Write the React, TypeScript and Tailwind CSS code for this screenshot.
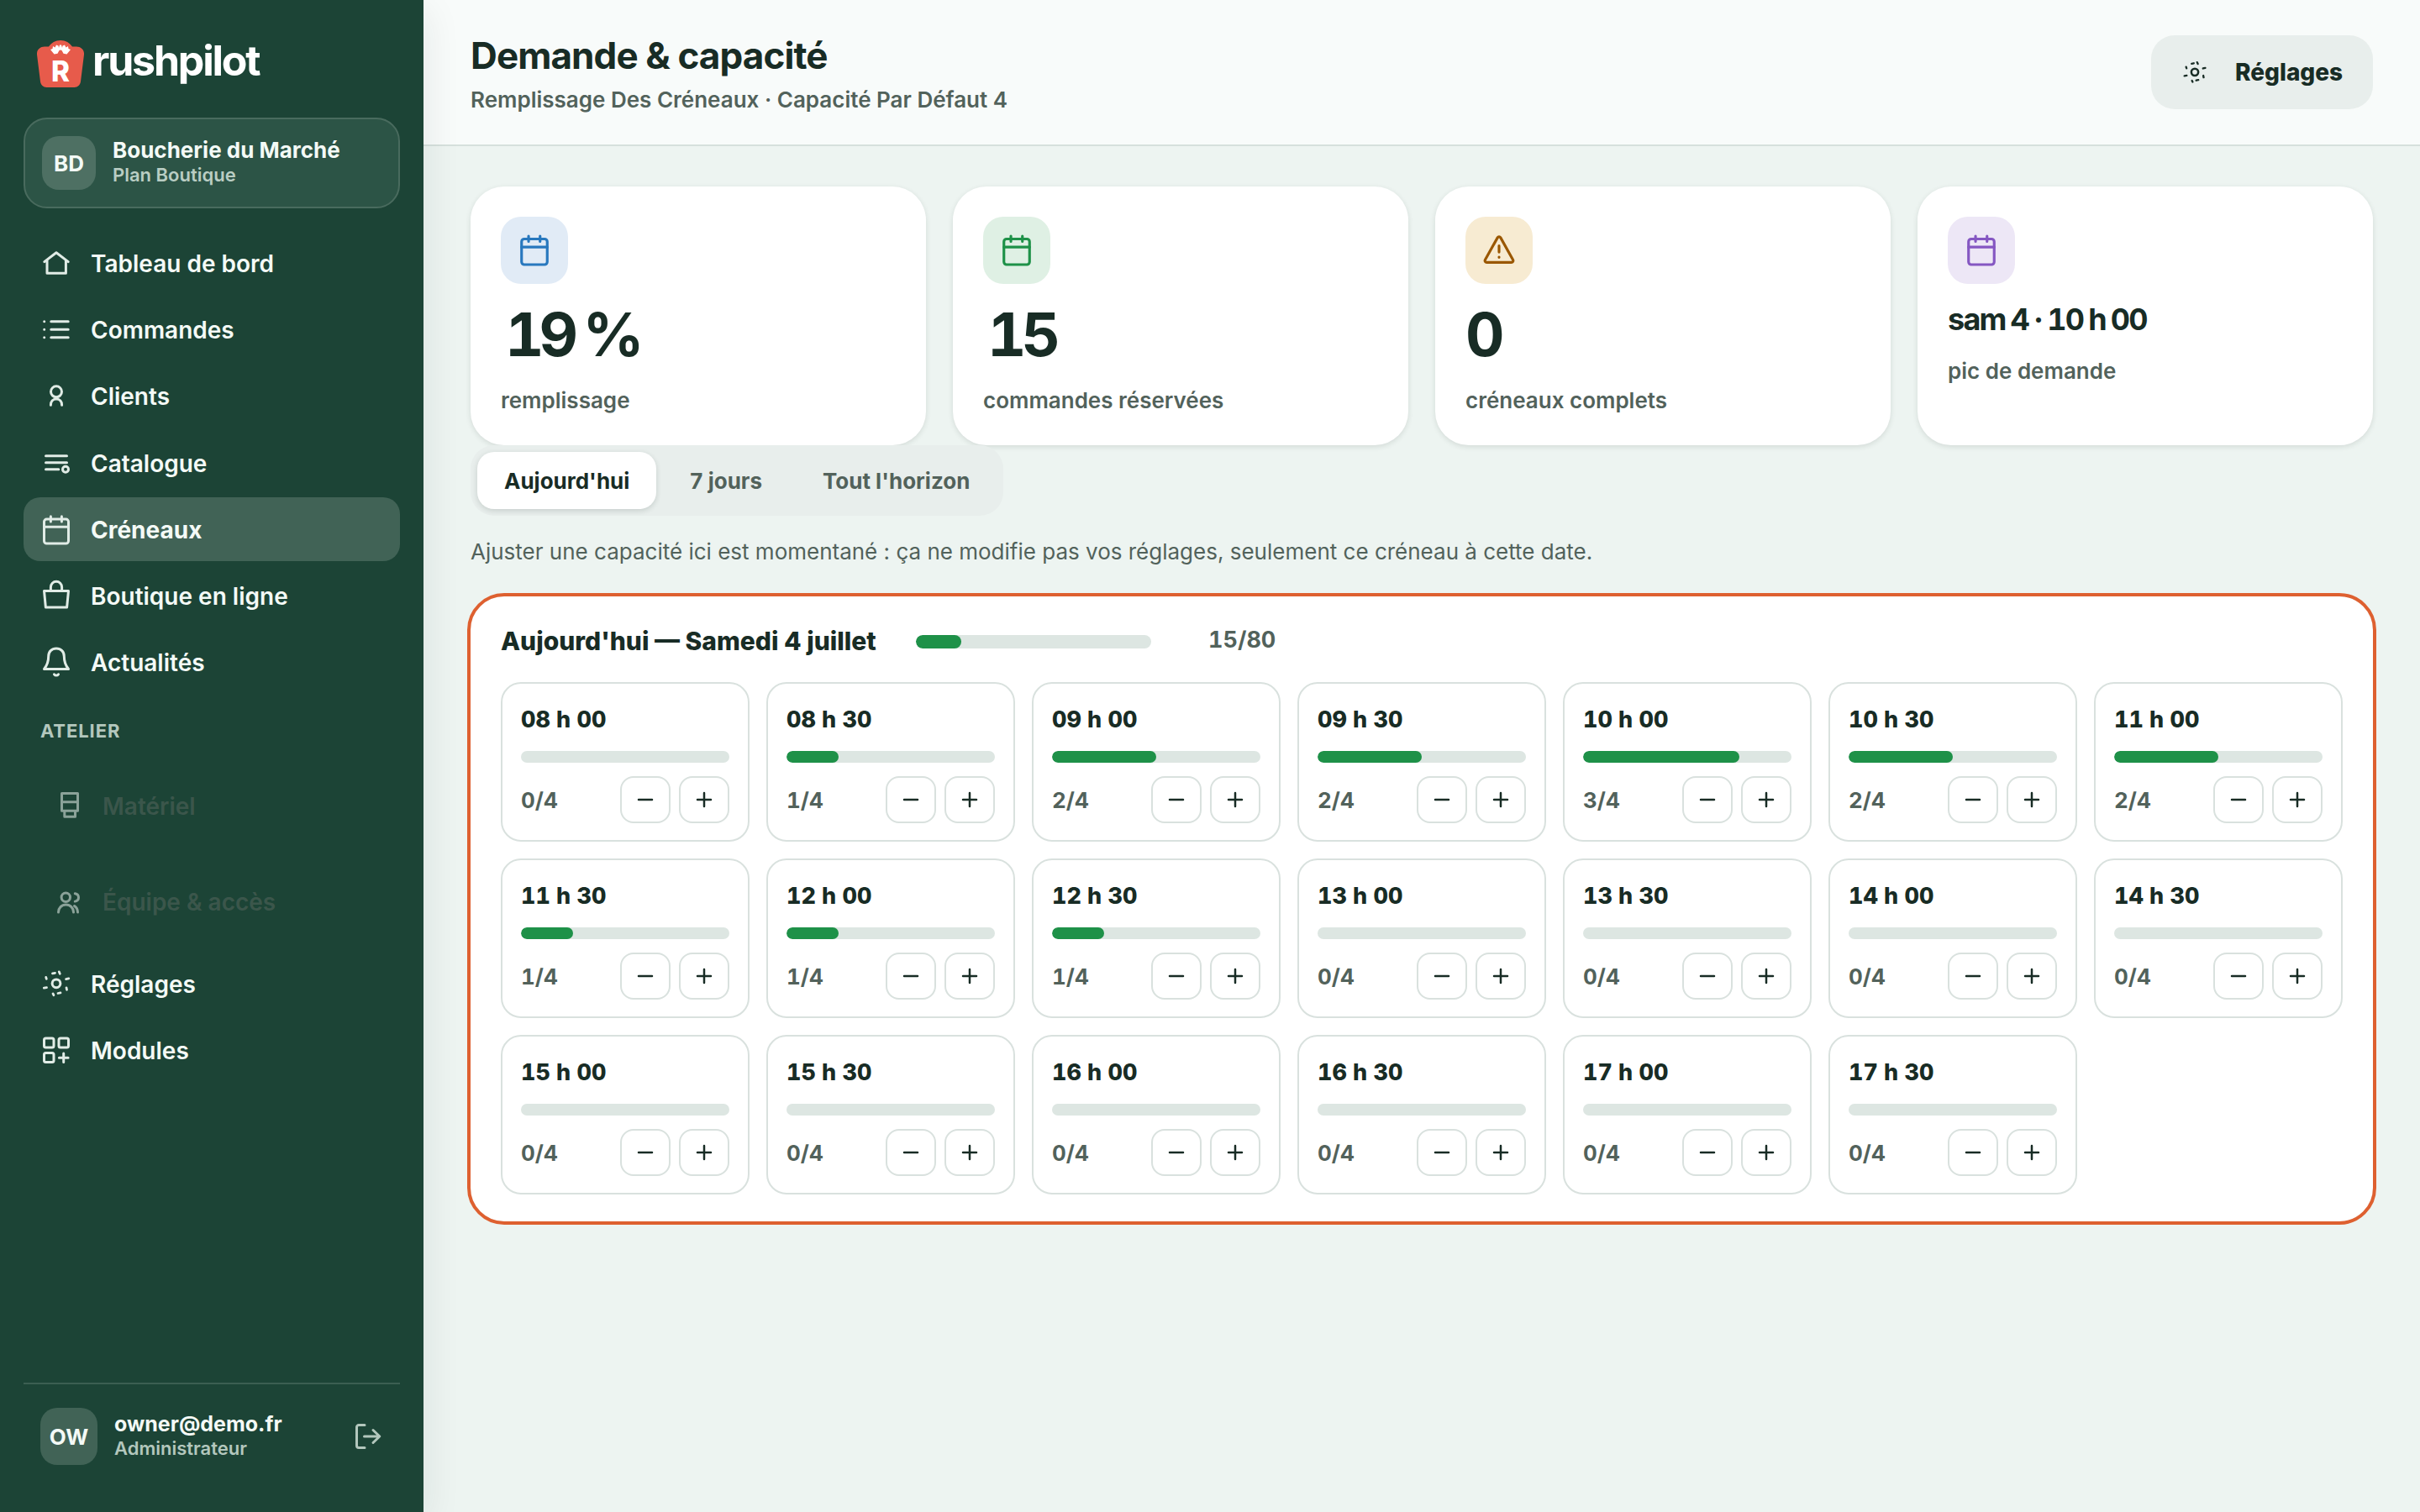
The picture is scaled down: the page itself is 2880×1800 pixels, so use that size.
import React from 'react';

type IconProps = { className?: string };

const Svg = ({ className = 'size-[38px]', children }: any) => (
  <svg
    viewBox="0 0 38 38"
    fill="none"
    stroke="currentColor"
    strokeWidth={3}
    strokeLinecap="round"
    strokeLinejoin="round"
    className={`${className} shrink-0`}
  >
    {children}
  </svg>
);

const HomeIcon = (p: IconProps) => (
  <Svg {...p}>
    <path d="M4.8 17.6 19 6.7l14.2 10.9M8 15.6v15.6h22.4V15.6" />
  </Svg>
);

const ListIcon = (p: IconProps) => (
  <Svg {...p}>
    <path d="M4.7 9.7h.01M4.7 19.2h.01M4.7 28.7h.01M12.8 9.7h20.4M12.8 19.2h20.4M12.8 28.7h20.4" />
  </Svg>
);

const ClientIcon = (p: IconProps) => (
  <Svg {...p}>
    <circle cx="19" cy="13.3" r="6.5" />
    <path d="M12.4 29.2c0-4 2.4-7.2 6.6-7.2s6.6 3.2 6.6 7.2" />
  </Svg>
);

const CatalogIcon = (p: IconProps) => (
  <Svg {...p}>
    <path d="M6.5 10.8h25M6.5 18.8h25M6.5 26.8h15.3" />
    <circle cx="30" cy="26.8" r="3.5" />
  </Svg>
);

const CalendarIcon = (p: IconProps) => (
  <Svg {...p}>
    <rect x="4.5" y="7.1" width="29" height="29" rx="3" />
    <path d="M4.5 16.3h29M12.4 3.8V10M25.4 3.8V10" />
  </Svg>
);

const BagIcon = (p: IconProps) => (
  <Svg {...p}>
    <path d="M4.5 13.4h29l-1.9 19.7H6.4zM12.4 13V8.9a6.6 6.6 0 0 1 13.2 0V13" />
  </Svg>
);

const BellIcon = (p: IconProps) => (
  <Svg {...p}>
    <path d="M19 3c-5.6 0-9.3 3.8-9.3 9.3 0 7-1.4 10.6-5.2 15.2h29c-3.8-4.6-5.2-8.2-5.2-15.2C28.3 6.8 24.6 3 19 3zM16.5 33.8c1.3 1.7 3.7 1.7 5 0" />
  </Svg>
);

const DeviceIcon = (p: IconProps) => (
  <Svg {...p}>
    <path d="M9.5 3.5h19v20.7h-19zM9.5 13.7h19M12.8 24.2h12.7v7H12.8z" />
  </Svg>
);

const TeamIcon = (p: IconProps) => (
  <Svg {...p}>
    <circle cx="14.3" cy="13.3" r="5.2" />
    <path d="M5.5 31c0-5 3.8-9 9-9s9 4 9 9M25.3 8.7c2.4.5 4.2 2.4 4.2 4.7s-1.8 4.2-4.2 4.7M24.5 23.5c2.4 1.5 3.9 4.3 4 7.5" />
  </Svg>
);

const GearIcon = (p: IconProps) => (
  <Svg {...p}>
    <circle cx="19" cy="18.8" r="4.9" />
    <path
      strokeWidth="2.8"
      d="M14.5 6.9l3-.6M22.3 4.9l1 2.3M30.6 13.6l3.2-.7M31 23.8l.5 2.5M21 30.5l3-.6M15 30.9l.9 1.8M4.3 24.1l3.2-.5M6.7 11.4l.6 2"
    />
  </Svg>
);

const ModulesIcon = (p: IconProps) => (
  <Svg {...p}>
    <rect x="4.5" y="5.1" width="11.5" height="11" rx="2" />
    <rect x="22" y="5.1" width="11.5" height="11" rx="2" />
    <rect x="4.5" y="22.5" width="11.5" height="11" rx="2" />
    <path d="M27.7 23v10.4M22.4 28.2h10.7" />
  </Svg>
);

const WarningIcon = (p: IconProps) => (
  <Svg {...p}>
    <path d="M17.3 5.6 3.3 30.6a2 2 0 0 0 1.8 3h27.8a2 2 0 0 0 1.8-3L20.7 5.6a2 2 0 0 0-3.4 0zM19 14.9v7M19 27.6v.3" />
  </Svg>
);

const LogoutIcon = (p: IconProps) => (
  <Svg {...p}>
    <path d="M16 5.5H9A2.500 2.500 0 0 0 6.500 8v22A2.500 2.500 0 0 0 9 32.500h7M15.500 19h18M26 11.500l7.800 7.500-7.800 7.500" />
  </Svg>
);

const NAV = [
  { label: 'Tableau de bord', icon: HomeIcon },
  { label: 'Commandes', icon: ListIcon },
  { label: 'Clients', icon: ClientIcon },
  { label: 'Catalogue', icon: CatalogIcon },
  { label: 'Créneaux', icon: CalendarIcon, active: true },
  { label: 'Boutique en ligne', icon: BagIcon },
  { label: 'Actualités', icon: BellIcon },
];

const STATS = [
  { value: '19 %', label: 'remplissage', icon: CalendarIcon, tone: 'bg-[#e1ebf6] text-[#2878be]', size: 'pl-[5px] text-[72px] leading-[72px] tracking-[-6px]' },
  { value: '15', label: 'commandes réservées', icon: CalendarIcon, tone: 'bg-[#dff0e4] text-[#1e9148]', size: 'pl-[5px] text-[72px] leading-[72px] tracking-[-6px]' },
  { value: '0', label: 'créneaux complets', icon: WarningIcon, tone: 'bg-[#f7ebd2] text-[#9a5700]', size: 'text-[72px] leading-[72px]' },
  { value: 'sam 4 · 10 h 00', label: 'pic de demande', icon: CalendarIcon, tone: 'bg-[#ede7f6] text-[#8557c2]', size: 'text-[36px] leading-[37px] tracking-[-1.75px]' },
];

const CAPACITY = 4;

const SLOTS: [string, number][] = [
  ['08 h 00', 0],
  ['08 h 30', 1],
  ['09 h 00', 2],
  ['09 h 30', 2],
  ['10 h 00', 3],
  ['10 h 30', 2],
  ['11 h 00', 2],
  ['11 h 30', 1],
  ['12 h 00', 1],
  ['12 h 30', 1],
  ['13 h 00', 0],
  ['13 h 30', 0],
  ['14 h 00', 0],
  ['14 h 30', 0],
  ['15 h 00', 0],
  ['15 h 30', 0],
  ['16 h 00', 0],
  ['16 h 30', 0],
  ['17 h 00', 0],
  ['17 h 30', 0],
];

const NavItem = ({ label, icon: Icon, active }: any) => (
  <a
    className={`flex h-[75.2px] items-center gap-[22px] rounded-[20px] px-5 text-[28px] text-[#f4faf6] ${
      active ? 'bg-[#416356] font-bold' : 'font-semibold'
    }`}
  >
    <Icon className="size-[38px] text-[#e1ece6]" />
    <span className="pt-[1.5px]">{label}</span>
  </a>
);

const LockedItem = ({ label, icon: Icon }: any) => (
  <a className="flex h-[110px] items-center gap-5 pl-9 text-[28px] font-semibold text-[#3b564b]">
    <Icon className="size-[38px] text-[#8ba299]" />
    {label}
  </a>
);

const Logo = () => (
  <div className="flex h-[140px] shrink-0 items-start gap-[10px] pt-12 pl-4">
    <svg viewBox="0 0 56 56" className="size-14 shrink-0">
      <path
        d="M9 7.5h5C17 3 22 0 28 0s11 3 14 7.5h5c5.5 0 9.5 4 9 9.5l-4 32c-.5 4-3.5 7-7.5 7h-33c-4 0-7-3-7.5-7L0 17C-.5 11.500 3.500 7.500 9 7.500z"
        fill="#e75b4b"
      />
      <path
        d="M16 11l2.500-1 .5-3 2.500 1.500L23 5.500l2.500 1L26 9l1-3.500h2L30 9l.5-2.500 2.500-1 1.500 3L37 7l.5 3 2.500 1-2 2.500-2.500 3-4-.8-2-3.700-1.500-.5-1.500.5-2 3.700-4 .8-2.500-3z"
        fill="#fff"
      />
      <text
        x="28"
        y="48.5"
        textAnchor="middle"
        fill="#fff"
        fontSize="34"
        fontWeight="800"
        fontFamily="Inter, sans-serif"
        textLength="22"
        lengthAdjust="spacingAndGlyphs"
      >
        R
      </text>
    </svg>
    <span className="-mt-px text-[50px] leading-[50px] font-bold tracking-[-2.2px] text-white">rushpilot</span>
  </div>
);

const Sidebar = () => (
  <aside className="z-10 flex w-[504px] shrink-0 flex-col bg-[#1c4436] px-7 shadow-[4px_12px_40px_rgba(24,44,37,0.08)]">
    <Logo />
    <div className="mb-[27.6px] flex h-[108px] shrink-0 items-center gap-5 rounded-[28px] border-2 border-[#496b5e] bg-[#2c5446] px-5">
      <div className="flex size-16 items-center justify-center rounded-[20px] bg-[#4e7063] text-[26px] font-bold text-[#f4faf6]">
        BD
      </div>
      <div className="-mt-0.5">
        <p className="text-[26px] leading-[30px] font-bold text-[#f4faf6]">Boucherie du Marché</p>
        <p className="text-[22px] leading-[29px] font-semibold text-[#b9cdc3]">Plan Boutique</p>
      </div>
    </div>

    <nav className="flex flex-col gap-1">
      {NAV.map((item) => (
        <NavItem key={item.label} {...item} />
      ))}
      <p className="h-[70.6px] pt-[26px] pl-5 text-[22px] leading-[28px] font-bold tracking-[0.9px] text-[#b3c7bd]">ATELIER</p>
      <LockedItem label="Matériel" icon={DeviceIcon} />
      <LockedItem label="Équipe & accès" icon={TeamIcon} />
      <div className="flex flex-col gap-1 pt-px">
        <NavItem label="Réglages" icon={GearIcon} />
        <NavItem label="Modules" icon={ModulesIcon} />
      </div>
    </nav>

    <div className="mt-auto flex h-[154px] items-start gap-5 border-t-2 border-[#3b5f52] px-5 pt-7">
      <div className="flex size-[68px] items-center justify-center rounded-[20px] bg-[#416356] text-[26px] font-bold text-[#f4faf6]">
        OW
      </div>
      <div className="mt-1">
        <p className="text-[25px] leading-[30px] font-bold text-[#f4faf6]">owner@demo.fr</p>
        <p className="text-[22px] leading-[29px] font-semibold text-[#b3c7bd]">Administrateur</p>
      </div>
      <LogoutIcon className="mt-[15px] ml-auto size-[38px] text-[#b3c7bd]" />
    </div>
  </aside>
);

const StatCard = ({ value, label, icon: Icon, tone, size }: any) => (
  <div className="h-[308px] rounded-[40px] bg-white p-9 shadow-[0_2px_6px_rgba(24,44,37,0.12)]">
    <div className={`flex size-20 items-center justify-center rounded-3xl ${tone}`}>
      <Icon className="mb-0.5 size-10" />
    </div>
    <p className={`mt-6 font-bold text-[#182c25] tabular-nums [word-spacing:-2px] ${size}`}>{value}</p>
    <p className="mt-[25px] text-[26px] leading-9 font-semibold text-[#52625b]">{label}</p>
  </div>
);

const StepButton = ({ plus }: { plus?: boolean }) => (
  <button className="flex h-14 w-[60px] items-center justify-center rounded-2xl border-2 border-[#d9e1de] text-[#182c25]">
    <svg viewBox="0 0 24 24" className="size-6" stroke="currentColor" strokeWidth="2.5" strokeLinecap="round">
      <path d={plus ? 'M12 4v16M4 12h16' : 'M4 12h16'} />
    </svg>
  </button>
);

const SlotCard = ({ time, booked }: { time: string; booked: number }) => (
  <div className="h-[190px] rounded-3xl border-2 border-[#d9e1de] px-[22px] tabular-nums">
    <p className="mt-[23px] text-[27px] leading-10 font-extrabold text-[#182c25]">{time}</p>
    <div className="mt-[17px] h-3.5 overflow-hidden rounded-full bg-[#dde6e2]">
      <div className="h-full rounded-full bg-[#1e9148]" style={{ width: `${(booked / CAPACITY) * 100}%` }} />
    </div>
    <div className="mt-4 flex items-center gap-2.5">
      <span className="mr-auto text-[26px] font-bold text-[#52625b]">
        {booked}/{CAPACITY}
      </span>
      <StepButton />
      <StepButton plus />
    </div>
  </div>
);

export default function App() {
  return (
    <div className="flex h-[1800px] w-[2880px] overflow-hidden bg-[#edf4f1] font-[Inter,sans-serif]">
      <Sidebar />
      <main className="min-w-0 flex-1">
        <header className="flex h-[174px] items-start justify-between border-b-2 border-[#d6e0dc] bg-[#f8fbfa] px-14 pt-[38px]">
          <div>
            <h1 className="text-[44px] leading-[56px] font-bold tracking-[-0.9px] text-[#182c25]">Demande &amp; capacité</h1>
            <p className="mt-[7px] text-[26px] leading-9 font-semibold text-[#52625b]">
              Remplissage Des Créneaux · Capacité Par Défaut 4
            </p>
          </div>
          <button className="mt-1 flex h-[88px] w-[264px] items-center rounded-[28px] bg-[#e8eeec] pl-9 text-[28px] font-extrabold text-[#182c25]">
            <GearIcon className="size-8" />
            <span className="ml-8">Réglages</span>
          </button>
        </header>

        <div className="px-14 pt-12">
          <div className="grid grid-cols-4 gap-8">
            {STATS.map((s) => (
              <StatCard key={s.label} {...s} />
            ))}
          </div>

          <div className="relative flex h-[84px] w-fit gap-2 rounded-[28px] bg-[#e8eeec] p-2 text-[26px] font-bold text-[#52625b]">
            <button className="rounded-[20px] bg-white px-8 text-[#182c25] shadow-[0_2px_6px_rgba(24,44,37,0.16)]">Aujourd'hui</button>
            <button className="px-8">7 jours</button>
            <button className="px-8">Tout l'horizon</button>
          </div>

          <p className="mt-[25px] text-[26px] leading-9 text-[#52625b]">
            Ajuster une capacité ici est momentané : ça ne modifie pas vos réglages, seulement ce créneau à cette date.
          </p>

          <section className="mt-[35px] rounded-[40px] bg-white px-9 pt-[34px] pb-8 outline-4 outline-[#de6030]">
            <div className="flex h-10 items-center">
              <h2 className="w-[494px] pb-0.5 text-[30px] font-extrabold text-[#182c25]">Aujourd'hui — Samedi 4 juillet</h2>
              <div className="h-4 w-[280px] overflow-hidden rounded-full bg-[#dde6e2]">
                <div className="h-full w-[54px] rounded-full bg-[#1e9148]" />
              </div>
              <span className="ml-[68px] pb-1 text-[27px] font-bold text-[#52625b] tabular-nums">15/80</span>
            </div>
            <div className="mt-7 grid grid-cols-7 gap-5">
              {SLOTS.map(([time, booked]) => (
                <SlotCard key={time} time={time} booked={booked} />
              ))}
            </div>
          </section>
        </div>
      </main>
    </div>
  );
}
